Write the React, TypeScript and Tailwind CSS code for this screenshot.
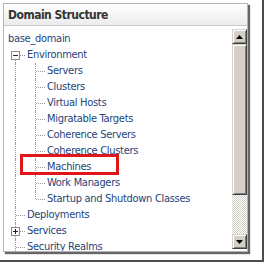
type Cell = "pipe" | "tee" | "last" | "first" | "blank";

type Row = {
  label: string;
  cells: Cell[];
  box?: "minus" | "plus";
};

const rows: Row[] = [
  { label: "base_domain", cells: [] },
  { label: "Environment", cells: ["first"], box: "minus" },
  { label: "Servers", cells: ["pipe", "tee"] },
  { label: "Clusters", cells: ["pipe", "tee"] },
  { label: "Virtual Hosts", cells: ["pipe", "tee"] },
  { label: "Migratable Targets", cells: ["pipe", "tee"] },
  { label: "Coherence Servers", cells: ["pipe", "tee"] },
  { label: "Coherence Clusters", cells: ["pipe", "tee"] },
  { label: "Machines", cells: ["pipe", "tee"] },
  { label: "Work Managers", cells: ["pipe", "tee"] },
  { label: "Startup and Shutdown Classes", cells: ["pipe", "last"] },
  { label: "Deployments", cells: ["tee"] },
  { label: "Services", cells: ["tee"], box: "plus" },
  { label: "Security Realms", cells: ["tee"] },
];

function GuideCell({ type, box }: { type: Cell; box?: "minus" | "plus" }) {
  return (
    <div className="relative h-4 w-5 shrink-0">
      {(type === "pipe" || type === "tee") && (
        <div className="absolute left-[10px] top-0 h-4 border-l border-dotted border-[#9a9a9a]" />
      )}
      {type === "last" && (
        <div className="absolute left-[10px] top-0 h-2 border-l border-dotted border-[#9a9a9a]" />
      )}
      {type === "first" && (
        <div className="absolute left-[10px] top-2 h-2 border-l border-dotted border-[#9a9a9a]" />
      )}
      {type !== "pipe" && type !== "blank" && (
        <div className="absolute left-[11px] top-2 w-[9px] border-t border-dotted border-[#9a9a9a]" />
      )}
      {box && (
        <div className="absolute left-[6px] top-[4px] flex h-[9px] w-[9px] items-center justify-center border border-[#8c8c8c] bg-white">
          <div className="absolute h-px w-[5px] bg-[#222]" />
          {box === "plus" && <div className="absolute h-[5px] w-px bg-[#222]" />}
        </div>
      )}
    </div>
  );
}

function ScrollButton({ down }: { down?: boolean }) {
  return (
    <div className="flex h-[15px] w-[15px] shrink-0 items-center justify-center border border-b-[#404040] border-l-[#d4d0c8] border-r-[#404040] border-t-[#d4d0c8] bg-[#d4d0c8] shadow-[inset_1px_1px_#fff,inset_-1px_-1px_#808080]">
      <svg width="7" height="4" viewBox="0 0 7 4">
        {down ? <path d="M0 0h7L3.5 4z" fill="#000" /> : <path d="M3.5 0L7 4H0z" fill="#000" />}
      </svg>
    </div>
  );
}

export default function App() {
  return (
    <div className="h-[264px] w-[268px] overflow-hidden bg-white" style={{ fontFamily: "'DejaVu Sans Condensed', 'DejaVu Sans', sans-serif" }}>
      <div className="h-[262px] w-[264px] border-b-2 border-r-2 border-[#4d4d4d] pl-[3px] pt-[3px]">
        <div className="flex h-[249px] w-[245px] flex-col border border-[#b4b4b4] bg-white shadow-[2px_2px_1px_#666]">
          <div className="flex h-[22px] items-center border-b border-[#c9c9c9] bg-gradient-to-b from-white to-[#ebebeb] pl-[4px] text-[12px] font-bold tracking-[-0.5px] text-[#333]">
            Domain Structure
          </div>

          <div className="flex min-h-0 flex-1">
            <div className="relative min-h-0 flex-1 overflow-hidden pl-[1px] pt-[5px] text-[11px] tracking-[-0.3px] text-[#23447a]">
              {rows.map((row) => (
                <div key={row.label} className="flex h-4 items-center whitespace-nowrap">
                  {row.cells.map((c, i) => (
                    <GuideCell key={i} type={c} box={i === row.cells.length - 1 ? row.box : undefined} />
                  ))}
                  <span className={row.cells.length === 0 ? "ml-[3px]" : "ml-[2px]"}>{row.label}</span>
                </div>
              ))}
              <div className="absolute left-[16px] top-[128px] h-[21px] w-[99px] border-[3px] border-[#e0161b]" />
            </div>

            <div className="flex w-[15px] shrink-0 flex-col pb-[2px] pt-[3px]">
              <ScrollButton />
              <div className="h-[151px] shrink-0 border border-b-[#404040] border-l-[#d4d0c8] border-r-[#404040] border-t-[#d4d0c8] bg-[#d4d0c8] shadow-[inset_1px_1px_#fff,inset_-1px_-1px_#808080]" />
              <div className="flex-1 bg-[repeating-conic-gradient(#d4d0c8_0%_25%,#fff_0%_50%)] bg-[length:2px_2px]" />
              <ScrollButton down />
            </div>
          </div>
        </div>
      </div>
    </div>
  );
}
